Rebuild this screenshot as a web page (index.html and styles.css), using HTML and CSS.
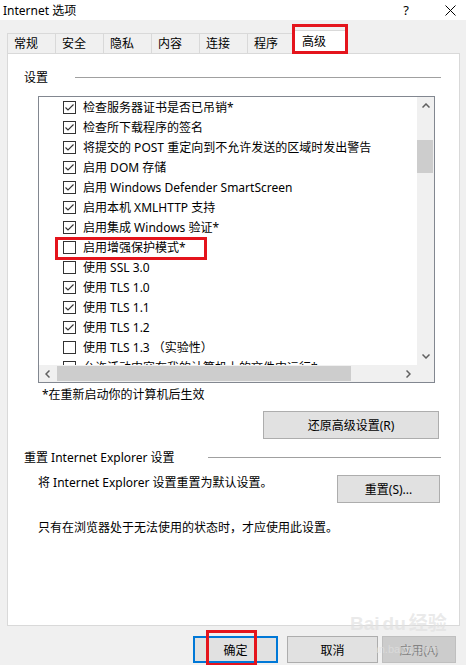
FILE: index.html
```html
<!DOCTYPE html>
<html lang="zh-CN">
<head>
    <meta charset="UTF-8">
    <title>Internet 选项</title>
    <link rel="stylesheet" href="styles.css">
</head>
<body>
    <div class="titlebar">
        <span class="title">Internet 选项</span>
        <span class="help">?</span>
        <svg class="close" width="11" height="11" viewBox="0 0 11 11"><path d="M0.5 0.5 L10.5 10.5 M10.5 0.5 L0.5 10.5" stroke="#000" stroke-width="1" fill="none"/></svg>
    </div>

    <div class="tabs">
        <div class="tab">常规</div>
        <div class="tab">安全</div>
        <div class="tab">隐私</div>
        <div class="tab">内容</div>
        <div class="tab">连接</div>
        <div class="tab">程序</div>
        <div class="tab active">高级<i class="mark mark-tab"></i></div>
    </div>

    <div class="panel">
        <div class="group-head">设置</div>

        <div class="listbox">
            <div class="list">
                <div class="row"><span class="box on"></span>检查服务器证书是否已吊销*</div>
                <div class="row"><span class="box on"></span>检查所下载程序的签名</div>
                <div class="row"><span class="box on"></span>将提交的 POST 重定向到不允许发送的区域时发出警告</div>
                <div class="row"><span class="box on"></span>启用 DOM 存储</div>
                <div class="row"><span class="box on"></span>启用 Windows Defender SmartScreen</div>
                <div class="row"><span class="box on"></span>启用本机 XMLHTTP 支持</div>
                <div class="row"><span class="box on"></span>启用集成 Windows 验证*</div>
                <div class="row"><span class="box"></span>启用增强保护模式*<i class="mark mark-row"></i></div>
                <div class="row"><span class="box"></span>使用 SSL 3.0</div>
                <div class="row"><span class="box on"></span>使用 TLS 1.0</div>
                <div class="row"><span class="box on"></span>使用 TLS 1.1</div>
                <div class="row"><span class="box on"></span>使用 TLS 1.2</div>
                <div class="row"><span class="box"></span>使用 TLS 1.3 （实验性）</div>
                <div class="row"><span class="box"></span>允许活动内容在我的计算机上的文件中运行*</div>
            </div>
            <div class="vscroll">
                <div class="arrow"><svg width="8" height="5" viewBox="0 0 8 5"><path d="M0.5 4.5 L4 1 L7.5 4.5" stroke="#606060" stroke-width="1.5" fill="none"/></svg></div>
                <div class="track"><div class="thumb"></div></div>
                <div class="arrow"><svg width="8" height="5" viewBox="0 0 8 5"><path d="M0.5 0.5 L4 4 L7.5 0.5" stroke="#606060" stroke-width="1.5" fill="none"/></svg></div>
            </div>
            <div class="hscroll">
                <div class="arrow"><svg width="5" height="8" viewBox="0 0 5 8"><path d="M4.5 0.5 L1 4 L4.5 7.5" stroke="#606060" stroke-width="1.5" fill="none"/></svg></div>
                <div class="track"><div class="thumb"></div></div>
                <div class="arrow"><svg width="5" height="8" viewBox="0 0 5 8"><path d="M0.5 0.5 L4 4 L0.5 7.5" stroke="#606060" stroke-width="1.5" fill="none"/></svg></div>
            </div>
            <div class="corner"></div>
        </div>

        <div class="note">*在重新启动你的计算机后生效</div>
        <div class="btn btn-restore">还原高级设置(R)</div>

        <div class="group-head group-head-wide">重置 Internet Explorer 设置</div>
        <div class="reset-row">
            <div class="text">将 Internet Explorer 设置重置为默认设置。</div>
            <div class="btn btn-reset">重置(S)...</div>
        </div>
        <div class="text hint">只有在浏览器处于无法使用的状态时，才应使用此设置。</div>
    </div>

    <div class="footer">
        <div class="btn btn-ok">确定<i class="mark mark-ok"></i></div>
        <div class="btn btn-cancel">取消</div>
        <div class="btn btn-apply">应用(A)</div>
    </div>

    <!-- 水印 -->
    <div class="watermark">
        <div class="wm-logo">Bai<span class="paw">du</span>经验</div>
        <div class="wm-url">jingyan.baidu.com</div>
    </div>
</body>
</html>
```

FILE: styles.css
```css
body {
    margin: 0;
    width: 466px;
    height: 665px;
    overflow: hidden;
    position: relative;
    background: #f0f0f0;
    font-family: "Noto Sans", "Noto Sans CJK SC", sans-serif;
    font-size: 12px;
    color: #000;
}

/* 标题栏 */
.titlebar {
    height: 20px;
    background: #fff;
    display: flex;
    align-items: center;
    padding-left: 3px;
}
.titlebar .title {
    flex: 1;
}
.help {
    font-size: 13px;
    margin-right: 36px;
}
.close {
    margin-right: 10px;
}

/* 选项卡 */
.tabs {
    display: flex;
    align-items: flex-end;
    height: 20px;
    margin: 13px 0 0 7px;
}
.tab {
    box-sizing: border-box;
    width: 49px;
    height: 20px;
    margin-right: -1px;
    padding-left: 6px;
    border: 1px solid #d9d9d9;
    border-bottom: 0;
    background: #f0f0f0;
    line-height: 19px;
}
.tab.active {
    position: relative;
    z-index: 1;
    width: 55px;
    height: 24px;
    margin: 0 0 -1px -2px;
    padding-left: 8px;
    background: #fff;
    line-height: 22px;
}

/* 红框标注 */
.mark {
    position: absolute;
    box-sizing: border-box;
    border: 3px solid #e4141c;
}
.mark-tab {
    left: -2px;
    top: -7px;
    width: 56px;
    height: 30px;
}
.mark-row {
    left: 16px;
    top: 0;
    width: 152px;
    height: 23px;
}
.mark-ok {
    left: 11px;
    top: -8px;
    width: 51px;
    height: 36px;
}

/* 面板 */
.panel {
    box-sizing: border-box;
    width: 453px;
    height: 573px;
    margin-left: 7px;
    padding: 0 18px 0 16px;
    background: #fff;
    border: 1px solid #d9d9d9;
}
.group-head {
    display: flex;
    align-items: center;
    height: 16px;
    margin-top: 15px;
}
.group-head::after {
    content: "";
    flex: 1;
    height: 1px;
    margin-left: 27px;
    background: #a0a0a0;
}
.group-head-wide {
    margin-top: 10px;
}
.group-head-wide::after {
    margin-left: 33px;
}

/* 列表框 */
.listbox {
    box-sizing: border-box;
    width: 397px;
    height: 287px;
    margin: 11px 0 0 14px;
    border: 1px solid #828790;
    display: grid;
    grid-template-columns: 1fr 17px;
    grid-template-rows: 1fr 17px;
}
.list {
    overflow: hidden;
    position: relative;
}
.row {
    position: relative;
    height: 20px;
    display: flex;
    align-items: center;
    padding-left: 24px;
    white-space: nowrap;
}
.box {
    flex: none;
    box-sizing: border-box;
    width: 13px;
    height: 13px;
    margin-right: 7px;
    border: 1px solid #333;
    background: #fff;
}
.box.on {
    background: #fff url("data:image/svg+xml,%3Csvg xmlns='http://www.w3.org/2000/svg' width='11' height='11' viewBox='0 0 11 11'%3E%3Cpath d='M1.5 5.5 L4 8 L9.5 2.5' stroke='%23333' stroke-width='1.1' fill='none'/%3E%3C/svg%3E") no-repeat center;
}

.vscroll,
.hscroll,
.corner {
    background: #f0f0f0;
}
.vscroll {
    display: flex;
    flex-direction: column;
}
.vscroll .arrow {
    height: 17px;
    display: flex;
    align-items: center;
    justify-content: center;
}
.vscroll .track {
    flex: 1;
}
.vscroll .thumb {
    margin: 26px 1px 0 0;
    height: 33px;
    background: #cdcdcd;
}
.hscroll {
    display: flex;
}
.hscroll .arrow {
    width: 17px;
    display: flex;
    align-items: center;
    justify-content: center;
}
.hscroll .track {
    flex: 1;
}
.hscroll .thumb {
    width: 294px;
    height: 15px;
    margin: 1px 0 0 1px;
    background: #cdcdcd;
}

.note {
    margin: 4px 0 0 18px;
    line-height: 16px;
}

/* 按钮 */
.btn {
    box-sizing: border-box;
    height: 28px;
    border: 1px solid #adadad;
    background: #e1e1e1;
    display: flex;
    align-items: center;
    justify-content: center;
}
.btn-restore {
    width: 176px;
    margin: 8px 2px 0 auto;
}
.reset-row {
    display: flex;
    margin-top: 10px;
}
.text {
    line-height: 16px;
    margin-left: 14px;
}
.reset-row .text {
    flex: 1;
}
.btn-reset {
    width: 103px;
    margin-right: 1px;
}
.hint {
    margin-top: 17px;
}

/* 底部按钮 */
.footer {
    display: flex;
    margin: 10px 0 0 193px;
}
.footer .btn {
    height: 27px;
}
.btn-ok {
    position: relative;
    width: 85px;
    border: 2px solid #0078d7;
}
.btn-cancel {
    width: 91px;
    margin-left: 9px;
}
.btn-apply {
    width: 74px;
    margin-left: 4px;
    background: #cccccc;
    border-color: #bfbfbf;
    color: #838383;
}

/* 水印 */
.watermark {
    position: absolute;
    left: 350px;
    top: 612px;
    white-space: nowrap;
    color: rgba(225, 225, 225, 0.7);
    font-family: "Liberation Sans", "Noto Sans CJK SC", sans-serif;
    pointer-events: none;
}
.wm-logo {
    font-size: 19px;
    font-weight: bold;
    line-height: 24px;
}
.wm-logo .paw {
    margin: 0 3px;
}
.wm-url {
    font-size: 11px;
    line-height: 14px;
    margin-top: 6px;
}
```
